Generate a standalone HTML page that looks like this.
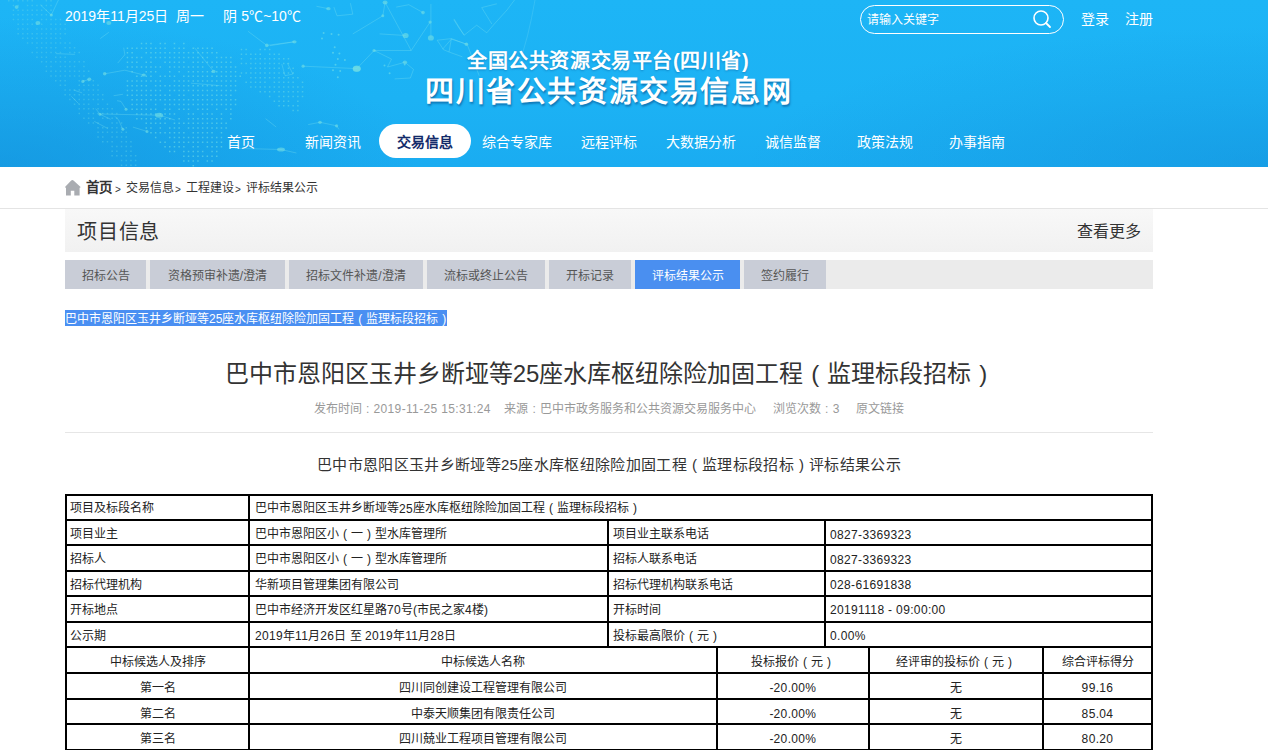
<!DOCTYPE html>
<html lang="zh-CN">
<head>
<meta charset="utf-8">
<style>
*{margin:0;padding:0;box-sizing:border-box}
html,body{width:1268px;height:750px;overflow:hidden;background:#fff}
body{font-family:"Liberation Sans",sans-serif;color:#333;position:relative}
.a{position:absolute;white-space:nowrap}
#hdr{position:absolute;left:0;top:0;width:1268px;height:167px;background:radial-gradient(ellipse 420px 150px at 0% 100%,rgba(18,140,215,.55),rgba(18,140,215,0)),radial-gradient(ellipse 520px 140px at 100% 100%,rgba(18,140,215,.45),rgba(18,140,215,0)),linear-gradient(180deg,#1db5f6 0%,#1cb2f4 60%,#1aacf1 100%);overflow:hidden}
#hdr .t{color:#fff}
.nav{position:absolute;top:124px;height:34px;line-height:36px;width:92px;text-align:center;color:#fff;font-size:14px}
.nav.on{background:#fff;color:#132b6a;font-weight:bold;border-radius:17px}
.tab{position:absolute;top:260px;height:29px;line-height:32px;text-align:center;font-size:12px;color:#555;background:#c9cdd7}
.tab.on{background:#4a8ff0;color:#fff}
.hl{position:absolute;background:#000}
.c{position:absolute;font-size:12px;line-height:16px;color:#222;white-space:nowrap}
.cc{text-align:center}
.n{letter-spacing:.35px;position:relative}
.up .n{top:1px}
.bc{top:180px;font-size:12px;line-height:16px;color:#333}
.gt{top:182px;font-size:10px;line-height:16px;color:#333}
.fp{display:inline-block;width:1em;text-align:center}
</style>
</head>
<body>
<div id="hdr">
<!--bg--><svg class="a" style="left:0;top:0" width="1268" height="167" viewBox="0 0 1268 167">
<path d="M535 0 Q 528 40 519 63" fill="none" stroke="#8fe6f4" stroke-opacity=".3" stroke-width=".7"/>
<path fill="#6ddbe6" fill-opacity=".6" d="M140.8 42.7h1.5v1.5h-1.5zM145.5 42.7h1.5v1.5h-1.5zM150.2 42.7h1.5v1.5h-1.5zM159.6 42.7h1.5v1.5h-1.5zM164.3 42.7h1.5v1.5h-1.5zM173.7 42.7h1.5v1.5h-1.5zM183.1 42.7h1.5v1.5h-1.5zM126.7 47.4h1.5v1.5h-1.5zM131.4 47.4h1.5v1.5h-1.5zM136.1 47.4h1.5v1.5h-1.5zM140.8 47.4h1.5v1.5h-1.5zM145.5 47.4h1.5v1.5h-1.5zM150.2 47.4h1.5v1.5h-1.5zM154.9 47.4h1.5v1.5h-1.5zM159.6 47.4h1.5v1.5h-1.5zM164.3 47.4h1.5v1.5h-1.5zM173.7 47.4h1.5v1.5h-1.5zM178.4 47.4h1.5v1.5h-1.5zM183.1 47.4h1.5v1.5h-1.5zM192.5 47.4h1.5v1.5h-1.5zM197.2 47.4h1.5v1.5h-1.5zM201.9 47.4h1.5v1.5h-1.5zM206.6 47.4h1.5v1.5h-1.5zM211.3 47.4h1.5v1.5h-1.5zM126.7 52.1h1.5v1.5h-1.5zM131.4 52.1h1.5v1.5h-1.5zM145.5 52.1h1.5v1.5h-1.5zM150.2 52.1h1.5v1.5h-1.5zM154.9 52.1h1.5v1.5h-1.5zM159.6 52.1h1.5v1.5h-1.5zM164.3 52.1h1.5v1.5h-1.5zM169.0 52.1h1.5v1.5h-1.5zM173.7 52.1h1.5v1.5h-1.5zM178.4 52.1h1.5v1.5h-1.5zM183.1 52.1h1.5v1.5h-1.5zM187.8 52.1h1.5v1.5h-1.5zM192.5 52.1h1.5v1.5h-1.5zM197.2 52.1h1.5v1.5h-1.5zM201.9 52.1h1.5v1.5h-1.5zM206.6 52.1h1.5v1.5h-1.5zM211.3 52.1h1.5v1.5h-1.5zM216.0 52.1h1.5v1.5h-1.5zM126.7 56.8h1.5v1.5h-1.5zM131.4 56.8h1.5v1.5h-1.5zM136.1 56.8h1.5v1.5h-1.5zM140.8 56.8h1.5v1.5h-1.5zM150.2 56.8h1.5v1.5h-1.5zM154.9 56.8h1.5v1.5h-1.5zM159.6 56.8h1.5v1.5h-1.5zM164.3 56.8h1.5v1.5h-1.5zM169.0 56.8h1.5v1.5h-1.5zM173.7 56.8h1.5v1.5h-1.5zM178.4 56.8h1.5v1.5h-1.5zM183.1 56.8h1.5v1.5h-1.5zM187.8 56.8h1.5v1.5h-1.5zM192.5 56.8h1.5v1.5h-1.5zM197.2 56.8h1.5v1.5h-1.5zM201.9 56.8h1.5v1.5h-1.5zM206.6 56.8h1.5v1.5h-1.5zM216.0 56.8h1.5v1.5h-1.5zM220.7 56.8h1.5v1.5h-1.5zM225.4 56.8h1.5v1.5h-1.5zM230.1 56.8h1.5v1.5h-1.5zM126.7 61.5h1.5v1.5h-1.5zM131.4 61.5h1.5v1.5h-1.5zM136.1 61.5h1.5v1.5h-1.5zM145.5 61.5h1.5v1.5h-1.5zM150.2 61.5h1.5v1.5h-1.5zM164.3 61.5h1.5v1.5h-1.5zM169.0 61.5h1.5v1.5h-1.5zM173.7 61.5h1.5v1.5h-1.5zM178.4 61.5h1.5v1.5h-1.5zM183.1 61.5h1.5v1.5h-1.5zM192.5 61.5h1.5v1.5h-1.5zM197.2 61.5h1.5v1.5h-1.5zM201.9 61.5h1.5v1.5h-1.5zM206.6 61.5h1.5v1.5h-1.5zM211.3 61.5h1.5v1.5h-1.5zM216.0 61.5h1.5v1.5h-1.5zM220.7 61.5h1.5v1.5h-1.5zM225.4 61.5h1.5v1.5h-1.5zM230.1 61.5h1.5v1.5h-1.5zM126.7 66.2h1.5v1.5h-1.5zM131.4 66.2h1.5v1.5h-1.5zM136.1 66.2h1.5v1.5h-1.5zM140.8 66.2h1.5v1.5h-1.5zM145.5 66.2h1.5v1.5h-1.5zM150.2 66.2h1.5v1.5h-1.5zM154.9 66.2h1.5v1.5h-1.5zM159.6 66.2h1.5v1.5h-1.5zM169.0 66.2h1.5v1.5h-1.5zM173.7 66.2h1.5v1.5h-1.5zM178.4 66.2h1.5v1.5h-1.5zM183.1 66.2h1.5v1.5h-1.5zM187.8 66.2h1.5v1.5h-1.5zM192.5 66.2h1.5v1.5h-1.5zM197.2 66.2h1.5v1.5h-1.5zM201.9 66.2h1.5v1.5h-1.5zM211.3 66.2h1.5v1.5h-1.5zM216.0 66.2h1.5v1.5h-1.5zM220.7 66.2h1.5v1.5h-1.5zM225.4 66.2h1.5v1.5h-1.5zM230.1 66.2h1.5v1.5h-1.5zM234.8 66.2h1.5v1.5h-1.5zM131.4 70.9h1.5v1.5h-1.5zM145.5 70.9h1.5v1.5h-1.5zM150.2 70.9h1.5v1.5h-1.5zM154.9 70.9h1.5v1.5h-1.5zM169.0 70.9h1.5v1.5h-1.5zM178.4 70.9h1.5v1.5h-1.5zM187.8 70.9h1.5v1.5h-1.5zM192.5 70.9h1.5v1.5h-1.5zM197.2 70.9h1.5v1.5h-1.5zM201.9 70.9h1.5v1.5h-1.5zM206.6 70.9h1.5v1.5h-1.5zM211.3 70.9h1.5v1.5h-1.5zM216.0 70.9h1.5v1.5h-1.5zM220.7 70.9h1.5v1.5h-1.5zM225.4 70.9h1.5v1.5h-1.5zM230.1 70.9h1.5v1.5h-1.5zM234.8 70.9h1.5v1.5h-1.5zM136.1 75.6h1.5v1.5h-1.5zM140.8 75.6h1.5v1.5h-1.5zM145.5 75.6h1.5v1.5h-1.5zM150.2 75.6h1.5v1.5h-1.5zM159.6 75.6h1.5v1.5h-1.5zM164.3 75.6h1.5v1.5h-1.5zM169.0 75.6h1.5v1.5h-1.5zM173.7 75.6h1.5v1.5h-1.5zM183.1 75.6h1.5v1.5h-1.5zM187.8 75.6h1.5v1.5h-1.5zM192.5 75.6h1.5v1.5h-1.5zM197.2 75.6h1.5v1.5h-1.5zM201.9 75.6h1.5v1.5h-1.5zM206.6 75.6h1.5v1.5h-1.5zM211.3 75.6h1.5v1.5h-1.5zM216.0 75.6h1.5v1.5h-1.5zM220.7 75.6h1.5v1.5h-1.5zM225.4 75.6h1.5v1.5h-1.5zM230.1 75.6h1.5v1.5h-1.5zM234.8 75.6h1.5v1.5h-1.5zM239.5 75.6h1.5v1.5h-1.5zM126.7 80.3h1.5v1.5h-1.5zM131.4 80.3h1.5v1.5h-1.5zM136.1 80.3h1.5v1.5h-1.5zM140.8 80.3h1.5v1.5h-1.5zM145.5 80.3h1.5v1.5h-1.5zM150.2 80.3h1.5v1.5h-1.5zM154.9 80.3h1.5v1.5h-1.5zM159.6 80.3h1.5v1.5h-1.5zM173.7 80.3h1.5v1.5h-1.5zM178.4 80.3h1.5v1.5h-1.5zM183.1 80.3h1.5v1.5h-1.5zM187.8 80.3h1.5v1.5h-1.5zM192.5 80.3h1.5v1.5h-1.5zM197.2 80.3h1.5v1.5h-1.5zM201.9 80.3h1.5v1.5h-1.5zM206.6 80.3h1.5v1.5h-1.5zM211.3 80.3h1.5v1.5h-1.5zM216.0 80.3h1.5v1.5h-1.5zM220.7 80.3h1.5v1.5h-1.5zM225.4 80.3h1.5v1.5h-1.5zM230.1 80.3h1.5v1.5h-1.5zM234.8 80.3h1.5v1.5h-1.5zM126.7 85.0h1.5v1.5h-1.5zM131.4 85.0h1.5v1.5h-1.5zM136.1 85.0h1.5v1.5h-1.5zM140.8 85.0h1.5v1.5h-1.5zM145.5 85.0h1.5v1.5h-1.5zM154.9 85.0h1.5v1.5h-1.5zM159.6 85.0h1.5v1.5h-1.5zM164.3 85.0h1.5v1.5h-1.5zM169.0 85.0h1.5v1.5h-1.5zM173.7 85.0h1.5v1.5h-1.5zM178.4 85.0h1.5v1.5h-1.5zM183.1 85.0h1.5v1.5h-1.5zM187.8 85.0h1.5v1.5h-1.5zM192.5 85.0h1.5v1.5h-1.5zM197.2 85.0h1.5v1.5h-1.5zM201.9 85.0h1.5v1.5h-1.5zM206.6 85.0h1.5v1.5h-1.5zM211.3 85.0h1.5v1.5h-1.5zM216.0 85.0h1.5v1.5h-1.5zM220.7 85.0h1.5v1.5h-1.5zM225.4 85.0h1.5v1.5h-1.5zM230.1 85.0h1.5v1.5h-1.5zM234.8 85.0h1.5v1.5h-1.5zM126.7 89.7h1.5v1.5h-1.5zM131.4 89.7h1.5v1.5h-1.5zM136.1 89.7h1.5v1.5h-1.5zM140.8 89.7h1.5v1.5h-1.5zM145.5 89.7h1.5v1.5h-1.5zM150.2 89.7h1.5v1.5h-1.5zM154.9 89.7h1.5v1.5h-1.5zM159.6 89.7h1.5v1.5h-1.5zM169.0 89.7h1.5v1.5h-1.5zM173.7 89.7h1.5v1.5h-1.5zM178.4 89.7h1.5v1.5h-1.5zM183.1 89.7h1.5v1.5h-1.5zM187.8 89.7h1.5v1.5h-1.5zM192.5 89.7h1.5v1.5h-1.5zM197.2 89.7h1.5v1.5h-1.5zM201.9 89.7h1.5v1.5h-1.5zM206.6 89.7h1.5v1.5h-1.5zM211.3 89.7h1.5v1.5h-1.5zM216.0 89.7h1.5v1.5h-1.5zM220.7 89.7h1.5v1.5h-1.5zM225.4 89.7h1.5v1.5h-1.5zM230.1 89.7h1.5v1.5h-1.5zM234.8 89.7h1.5v1.5h-1.5zM126.7 94.4h1.5v1.5h-1.5zM131.4 94.4h1.5v1.5h-1.5zM136.1 94.4h1.5v1.5h-1.5zM140.8 94.4h1.5v1.5h-1.5zM145.5 94.4h1.5v1.5h-1.5zM150.2 94.4h1.5v1.5h-1.5zM154.9 94.4h1.5v1.5h-1.5zM159.6 94.4h1.5v1.5h-1.5zM164.3 94.4h1.5v1.5h-1.5zM169.0 94.4h1.5v1.5h-1.5zM178.4 94.4h1.5v1.5h-1.5zM183.1 94.4h1.5v1.5h-1.5zM192.5 94.4h1.5v1.5h-1.5zM197.2 94.4h1.5v1.5h-1.5zM201.9 94.4h1.5v1.5h-1.5zM206.6 94.4h1.5v1.5h-1.5zM211.3 94.4h1.5v1.5h-1.5zM216.0 94.4h1.5v1.5h-1.5zM220.7 94.4h1.5v1.5h-1.5zM225.4 94.4h1.5v1.5h-1.5zM230.1 94.4h1.5v1.5h-1.5zM131.4 99.1h1.5v1.5h-1.5zM136.1 99.1h1.5v1.5h-1.5zM140.8 99.1h1.5v1.5h-1.5zM145.5 99.1h1.5v1.5h-1.5zM150.2 99.1h1.5v1.5h-1.5zM154.9 99.1h1.5v1.5h-1.5zM159.6 99.1h1.5v1.5h-1.5zM164.3 99.1h1.5v1.5h-1.5zM169.0 99.1h1.5v1.5h-1.5zM173.7 99.1h1.5v1.5h-1.5zM178.4 99.1h1.5v1.5h-1.5zM183.1 99.1h1.5v1.5h-1.5zM187.8 99.1h1.5v1.5h-1.5zM192.5 99.1h1.5v1.5h-1.5zM197.2 99.1h1.5v1.5h-1.5zM201.9 99.1h1.5v1.5h-1.5zM206.6 99.1h1.5v1.5h-1.5zM211.3 99.1h1.5v1.5h-1.5zM216.0 99.1h1.5v1.5h-1.5zM220.7 99.1h1.5v1.5h-1.5zM225.4 99.1h1.5v1.5h-1.5zM230.1 99.1h1.5v1.5h-1.5zM234.8 99.1h1.5v1.5h-1.5zM131.4 103.8h1.5v1.5h-1.5zM136.1 103.8h1.5v1.5h-1.5zM140.8 103.8h1.5v1.5h-1.5zM145.5 103.8h1.5v1.5h-1.5zM154.9 103.8h1.5v1.5h-1.5zM164.3 103.8h1.5v1.5h-1.5zM169.0 103.8h1.5v1.5h-1.5zM173.7 103.8h1.5v1.5h-1.5zM178.4 103.8h1.5v1.5h-1.5zM183.1 103.8h1.5v1.5h-1.5zM187.8 103.8h1.5v1.5h-1.5zM192.5 103.8h1.5v1.5h-1.5zM197.2 103.8h1.5v1.5h-1.5zM201.9 103.8h1.5v1.5h-1.5zM206.6 103.8h1.5v1.5h-1.5zM211.3 103.8h1.5v1.5h-1.5zM216.0 103.8h1.5v1.5h-1.5zM220.7 103.8h1.5v1.5h-1.5zM225.4 103.8h1.5v1.5h-1.5zM230.1 103.8h1.5v1.5h-1.5zM234.8 103.8h1.5v1.5h-1.5zM131.4 108.5h1.5v1.5h-1.5zM136.1 108.5h1.5v1.5h-1.5zM140.8 108.5h1.5v1.5h-1.5zM145.5 108.5h1.5v1.5h-1.5zM150.2 108.5h1.5v1.5h-1.5zM154.9 108.5h1.5v1.5h-1.5zM164.3 108.5h1.5v1.5h-1.5zM169.0 108.5h1.5v1.5h-1.5zM178.4 108.5h1.5v1.5h-1.5zM183.1 108.5h1.5v1.5h-1.5zM187.8 108.5h1.5v1.5h-1.5zM197.2 108.5h1.5v1.5h-1.5zM201.9 108.5h1.5v1.5h-1.5zM206.6 108.5h1.5v1.5h-1.5zM216.0 108.5h1.5v1.5h-1.5zM225.4 108.5h1.5v1.5h-1.5zM230.1 108.5h1.5v1.5h-1.5zM136.1 113.2h1.5v1.5h-1.5zM140.8 113.2h1.5v1.5h-1.5zM145.5 113.2h1.5v1.5h-1.5zM150.2 113.2h1.5v1.5h-1.5zM154.9 113.2h1.5v1.5h-1.5zM159.6 113.2h1.5v1.5h-1.5zM164.3 113.2h1.5v1.5h-1.5zM169.0 113.2h1.5v1.5h-1.5zM173.7 113.2h1.5v1.5h-1.5zM187.8 113.2h1.5v1.5h-1.5zM192.5 113.2h1.5v1.5h-1.5zM201.9 113.2h1.5v1.5h-1.5zM206.6 113.2h1.5v1.5h-1.5zM211.3 113.2h1.5v1.5h-1.5zM220.7 113.2h1.5v1.5h-1.5zM230.1 113.2h1.5v1.5h-1.5zM136.1 117.9h1.5v1.5h-1.5zM140.8 117.9h1.5v1.5h-1.5zM145.5 117.9h1.5v1.5h-1.5zM150.2 117.9h1.5v1.5h-1.5zM154.9 117.9h1.5v1.5h-1.5zM159.6 117.9h1.5v1.5h-1.5zM164.3 117.9h1.5v1.5h-1.5zM169.0 117.9h1.5v1.5h-1.5zM178.4 117.9h1.5v1.5h-1.5zM187.8 117.9h1.5v1.5h-1.5zM192.5 117.9h1.5v1.5h-1.5zM197.2 117.9h1.5v1.5h-1.5zM201.9 117.9h1.5v1.5h-1.5zM206.6 117.9h1.5v1.5h-1.5zM211.3 117.9h1.5v1.5h-1.5zM216.0 117.9h1.5v1.5h-1.5zM220.7 117.9h1.5v1.5h-1.5zM230.1 117.9h1.5v1.5h-1.5zM145.5 122.6h1.5v1.5h-1.5zM150.2 122.6h1.5v1.5h-1.5zM154.9 122.6h1.5v1.5h-1.5zM159.6 122.6h1.5v1.5h-1.5zM164.3 122.6h1.5v1.5h-1.5zM173.7 122.6h1.5v1.5h-1.5zM178.4 122.6h1.5v1.5h-1.5zM183.1 122.6h1.5v1.5h-1.5zM187.8 122.6h1.5v1.5h-1.5zM192.5 122.6h1.5v1.5h-1.5zM197.2 122.6h1.5v1.5h-1.5zM201.9 122.6h1.5v1.5h-1.5zM206.6 122.6h1.5v1.5h-1.5zM211.3 122.6h1.5v1.5h-1.5zM216.0 122.6h1.5v1.5h-1.5zM220.7 122.6h1.5v1.5h-1.5zM225.4 122.6h1.5v1.5h-1.5zM145.5 127.3h1.5v1.5h-1.5zM150.2 127.3h1.5v1.5h-1.5zM159.6 127.3h1.5v1.5h-1.5zM169.0 127.3h1.5v1.5h-1.5zM173.7 127.3h1.5v1.5h-1.5zM178.4 127.3h1.5v1.5h-1.5zM187.8 127.3h1.5v1.5h-1.5zM192.5 127.3h1.5v1.5h-1.5zM197.2 127.3h1.5v1.5h-1.5zM201.9 127.3h1.5v1.5h-1.5zM206.6 127.3h1.5v1.5h-1.5zM211.3 127.3h1.5v1.5h-1.5zM216.0 127.3h1.5v1.5h-1.5zM220.7 127.3h1.5v1.5h-1.5zM225.4 127.3h1.5v1.5h-1.5zM150.2 132.0h1.5v1.5h-1.5zM154.9 132.0h1.5v1.5h-1.5zM159.6 132.0h1.5v1.5h-1.5zM164.3 132.0h1.5v1.5h-1.5zM169.0 132.0h1.5v1.5h-1.5zM173.7 132.0h1.5v1.5h-1.5zM178.4 132.0h1.5v1.5h-1.5zM183.1 132.0h1.5v1.5h-1.5zM192.5 132.0h1.5v1.5h-1.5zM197.2 132.0h1.5v1.5h-1.5zM201.9 132.0h1.5v1.5h-1.5zM206.6 132.0h1.5v1.5h-1.5zM211.3 132.0h1.5v1.5h-1.5zM220.7 132.0h1.5v1.5h-1.5zM154.9 136.7h1.5v1.5h-1.5zM169.0 136.7h1.5v1.5h-1.5zM173.7 136.7h1.5v1.5h-1.5zM178.4 136.7h1.5v1.5h-1.5zM183.1 136.7h1.5v1.5h-1.5zM187.8 136.7h1.5v1.5h-1.5zM192.5 136.7h1.5v1.5h-1.5zM197.2 136.7h1.5v1.5h-1.5zM201.9 136.7h1.5v1.5h-1.5zM206.6 136.7h1.5v1.5h-1.5zM211.3 136.7h1.5v1.5h-1.5zM216.0 136.7h1.5v1.5h-1.5zM220.7 136.7h1.5v1.5h-1.5zM159.6 141.4h1.5v1.5h-1.5zM164.3 141.4h1.5v1.5h-1.5zM173.7 141.4h1.5v1.5h-1.5zM178.4 141.4h1.5v1.5h-1.5zM183.1 141.4h1.5v1.5h-1.5zM187.8 141.4h1.5v1.5h-1.5zM192.5 141.4h1.5v1.5h-1.5zM197.2 141.4h1.5v1.5h-1.5zM201.9 141.4h1.5v1.5h-1.5zM206.6 141.4h1.5v1.5h-1.5zM211.3 141.4h1.5v1.5h-1.5zM216.0 141.4h1.5v1.5h-1.5zM220.7 141.4h1.5v1.5h-1.5zM164.3 146.1h1.5v1.5h-1.5zM169.0 146.1h1.5v1.5h-1.5zM173.7 146.1h1.5v1.5h-1.5zM178.4 146.1h1.5v1.5h-1.5zM183.1 146.1h1.5v1.5h-1.5zM192.5 146.1h1.5v1.5h-1.5zM197.2 146.1h1.5v1.5h-1.5zM206.6 146.1h1.5v1.5h-1.5zM211.3 146.1h1.5v1.5h-1.5zM216.0 146.1h1.5v1.5h-1.5zM220.7 146.1h1.5v1.5h-1.5zM169.0 150.8h1.5v1.5h-1.5zM173.7 150.8h1.5v1.5h-1.5zM183.1 150.8h1.5v1.5h-1.5zM187.8 150.8h1.5v1.5h-1.5zM192.5 150.8h1.5v1.5h-1.5zM197.2 150.8h1.5v1.5h-1.5zM201.9 150.8h1.5v1.5h-1.5zM211.3 150.8h1.5v1.5h-1.5zM216.0 150.8h1.5v1.5h-1.5zM183.1 155.5h1.5v1.5h-1.5zM187.8 155.5h1.5v1.5h-1.5zM192.5 155.5h1.5v1.5h-1.5zM197.2 155.5h1.5v1.5h-1.5zM201.9 155.5h1.5v1.5h-1.5zM206.6 155.5h1.5v1.5h-1.5zM211.3 155.5h1.5v1.5h-1.5zM216.0 155.5h1.5v1.5h-1.5zM183.1 160.2h1.5v1.5h-1.5zM187.8 160.2h1.5v1.5h-1.5zM192.5 160.2h1.5v1.5h-1.5zM197.2 160.2h1.5v1.5h-1.5zM206.6 160.2h1.5v1.5h-1.5zM211.3 160.2h1.5v1.5h-1.5zM192.5 164.9h1.5v1.5h-1.5z"/>
<path fill="#6ddbe6" fill-opacity=".5" d="M240.7 48.7h1.5v1.5h-1.5zM245.4 48.7h1.5v1.5h-1.5zM259.5 48.7h1.5v1.5h-1.5zM264.2 48.7h1.5v1.5h-1.5zM268.9 48.7h1.5v1.5h-1.5zM240.7 53.4h1.5v1.5h-1.5zM245.4 53.4h1.5v1.5h-1.5zM250.1 53.4h1.5v1.5h-1.5zM254.8 53.4h1.5v1.5h-1.5zM259.5 53.4h1.5v1.5h-1.5zM268.9 53.4h1.5v1.5h-1.5zM273.6 53.4h1.5v1.5h-1.5zM278.3 53.4h1.5v1.5h-1.5zM240.7 58.1h1.5v1.5h-1.5zM250.1 58.1h1.5v1.5h-1.5zM254.8 58.1h1.5v1.5h-1.5zM259.5 58.1h1.5v1.5h-1.5zM264.2 58.1h1.5v1.5h-1.5zM268.9 58.1h1.5v1.5h-1.5zM273.6 58.1h1.5v1.5h-1.5zM278.3 58.1h1.5v1.5h-1.5zM283.0 58.1h1.5v1.5h-1.5zM287.7 58.1h1.5v1.5h-1.5zM240.7 62.8h1.5v1.5h-1.5zM245.4 62.8h1.5v1.5h-1.5zM250.1 62.8h1.5v1.5h-1.5zM254.8 62.8h1.5v1.5h-1.5zM259.5 62.8h1.5v1.5h-1.5zM264.2 62.8h1.5v1.5h-1.5zM268.9 62.8h1.5v1.5h-1.5zM273.6 62.8h1.5v1.5h-1.5zM278.3 62.8h1.5v1.5h-1.5zM283.0 62.8h1.5v1.5h-1.5zM287.7 62.8h1.5v1.5h-1.5zM250.1 67.5h1.5v1.5h-1.5zM254.8 67.5h1.5v1.5h-1.5zM259.5 67.5h1.5v1.5h-1.5zM264.2 67.5h1.5v1.5h-1.5zM268.9 67.5h1.5v1.5h-1.5zM273.6 67.5h1.5v1.5h-1.5zM278.3 67.5h1.5v1.5h-1.5zM287.7 67.5h1.5v1.5h-1.5zM292.4 67.5h1.5v1.5h-1.5zM240.7 72.2h1.5v1.5h-1.5zM245.4 72.2h1.5v1.5h-1.5zM250.1 72.2h1.5v1.5h-1.5zM254.8 72.2h1.5v1.5h-1.5zM259.5 72.2h1.5v1.5h-1.5zM264.2 72.2h1.5v1.5h-1.5zM268.9 72.2h1.5v1.5h-1.5zM273.6 72.2h1.5v1.5h-1.5zM278.3 72.2h1.5v1.5h-1.5zM283.0 72.2h1.5v1.5h-1.5zM287.7 72.2h1.5v1.5h-1.5zM292.4 72.2h1.5v1.5h-1.5zM250.1 76.9h1.5v1.5h-1.5zM254.8 76.9h1.5v1.5h-1.5zM259.5 76.9h1.5v1.5h-1.5zM264.2 76.9h1.5v1.5h-1.5zM268.9 76.9h1.5v1.5h-1.5zM273.6 76.9h1.5v1.5h-1.5zM278.3 76.9h1.5v1.5h-1.5zM283.0 76.9h1.5v1.5h-1.5zM287.7 76.9h1.5v1.5h-1.5zM292.4 76.9h1.5v1.5h-1.5zM297.1 76.9h1.5v1.5h-1.5zM245.4 81.6h1.5v1.5h-1.5zM250.1 81.6h1.5v1.5h-1.5zM254.8 81.6h1.5v1.5h-1.5zM259.5 81.6h1.5v1.5h-1.5zM264.2 81.6h1.5v1.5h-1.5zM273.6 81.6h1.5v1.5h-1.5zM278.3 81.6h1.5v1.5h-1.5zM283.0 81.6h1.5v1.5h-1.5zM287.7 81.6h1.5v1.5h-1.5zM292.4 81.6h1.5v1.5h-1.5zM301.8 81.6h1.5v1.5h-1.5zM250.1 86.3h1.5v1.5h-1.5zM254.8 86.3h1.5v1.5h-1.5zM259.5 86.3h1.5v1.5h-1.5zM264.2 86.3h1.5v1.5h-1.5zM268.9 86.3h1.5v1.5h-1.5zM273.6 86.3h1.5v1.5h-1.5zM278.3 86.3h1.5v1.5h-1.5zM283.0 86.3h1.5v1.5h-1.5zM287.7 86.3h1.5v1.5h-1.5zM292.4 86.3h1.5v1.5h-1.5zM297.1 86.3h1.5v1.5h-1.5zM301.8 86.3h1.5v1.5h-1.5zM259.5 91.0h1.5v1.5h-1.5zM264.2 91.0h1.5v1.5h-1.5zM268.9 91.0h1.5v1.5h-1.5zM273.6 91.0h1.5v1.5h-1.5zM278.3 91.0h1.5v1.5h-1.5zM283.0 91.0h1.5v1.5h-1.5zM287.7 91.0h1.5v1.5h-1.5zM292.4 91.0h1.5v1.5h-1.5zM297.1 91.0h1.5v1.5h-1.5zM301.8 91.0h1.5v1.5h-1.5zM268.9 95.7h1.5v1.5h-1.5zM278.3 95.7h1.5v1.5h-1.5zM283.0 95.7h1.5v1.5h-1.5zM287.7 95.7h1.5v1.5h-1.5zM292.4 95.7h1.5v1.5h-1.5zM297.1 95.7h1.5v1.5h-1.5zM301.8 95.7h1.5v1.5h-1.5zM273.6 100.4h1.5v1.5h-1.5zM278.3 100.4h1.5v1.5h-1.5zM283.0 100.4h1.5v1.5h-1.5zM287.7 100.4h1.5v1.5h-1.5zM297.1 100.4h1.5v1.5h-1.5zM278.3 105.1h1.5v1.5h-1.5zM283.0 105.1h1.5v1.5h-1.5zM287.7 105.1h1.5v1.5h-1.5zM292.4 105.1h1.5v1.5h-1.5zM297.1 105.1h1.5v1.5h-1.5zM292.4 109.8h1.5v1.5h-1.5zM297.1 109.8h1.5v1.5h-1.5z"/>
<path fill="#6ddbe6" fill-opacity=".35" d="M8.0 0.0h1.5v1.5h-1.5zM12.7 0.0h1.5v1.5h-1.5zM17.4 0.0h1.5v1.5h-1.5zM22.1 0.0h1.5v1.5h-1.5zM26.8 0.0h1.5v1.5h-1.5zM31.5 0.0h1.5v1.5h-1.5zM45.6 0.0h1.5v1.5h-1.5zM50.3 0.0h1.5v1.5h-1.5zM12.7 4.7h1.5v1.5h-1.5zM17.4 4.7h1.5v1.5h-1.5zM26.8 4.7h1.5v1.5h-1.5zM31.5 4.7h1.5v1.5h-1.5zM36.2 4.7h1.5v1.5h-1.5zM40.9 4.7h1.5v1.5h-1.5zM45.6 4.7h1.5v1.5h-1.5zM50.3 4.7h1.5v1.5h-1.5zM12.7 9.4h1.5v1.5h-1.5zM17.4 9.4h1.5v1.5h-1.5zM22.1 9.4h1.5v1.5h-1.5zM26.8 9.4h1.5v1.5h-1.5zM31.5 9.4h1.5v1.5h-1.5zM36.2 9.4h1.5v1.5h-1.5zM40.9 9.4h1.5v1.5h-1.5zM45.6 9.4h1.5v1.5h-1.5zM50.3 9.4h1.5v1.5h-1.5zM12.7 14.1h1.5v1.5h-1.5zM17.4 14.1h1.5v1.5h-1.5zM22.1 14.1h1.5v1.5h-1.5zM26.8 14.1h1.5v1.5h-1.5zM31.5 14.1h1.5v1.5h-1.5zM36.2 14.1h1.5v1.5h-1.5zM40.9 14.1h1.5v1.5h-1.5zM45.6 14.1h1.5v1.5h-1.5zM50.3 14.1h1.5v1.5h-1.5zM12.7 18.8h1.5v1.5h-1.5zM17.4 18.8h1.5v1.5h-1.5zM22.1 18.8h1.5v1.5h-1.5zM26.8 18.8h1.5v1.5h-1.5zM31.5 18.8h1.5v1.5h-1.5zM40.9 18.8h1.5v1.5h-1.5zM45.6 18.8h1.5v1.5h-1.5zM50.3 18.8h1.5v1.5h-1.5zM55.0 18.8h1.5v1.5h-1.5zM59.7 18.8h1.5v1.5h-1.5zM17.4 23.5h1.5v1.5h-1.5zM22.1 23.5h1.5v1.5h-1.5zM26.8 23.5h1.5v1.5h-1.5zM31.5 23.5h1.5v1.5h-1.5zM36.2 23.5h1.5v1.5h-1.5zM40.9 23.5h1.5v1.5h-1.5zM50.3 23.5h1.5v1.5h-1.5zM55.0 23.5h1.5v1.5h-1.5zM59.7 23.5h1.5v1.5h-1.5zM64.4 23.5h1.5v1.5h-1.5zM17.4 28.2h1.5v1.5h-1.5zM22.1 28.2h1.5v1.5h-1.5zM26.8 28.2h1.5v1.5h-1.5zM36.2 28.2h1.5v1.5h-1.5zM40.9 28.2h1.5v1.5h-1.5zM45.6 28.2h1.5v1.5h-1.5zM50.3 28.2h1.5v1.5h-1.5zM55.0 28.2h1.5v1.5h-1.5zM59.7 28.2h1.5v1.5h-1.5zM64.4 28.2h1.5v1.5h-1.5zM17.4 32.9h1.5v1.5h-1.5zM22.1 32.9h1.5v1.5h-1.5zM26.8 32.9h1.5v1.5h-1.5zM31.5 32.9h1.5v1.5h-1.5zM36.2 32.9h1.5v1.5h-1.5zM40.9 32.9h1.5v1.5h-1.5zM45.6 32.9h1.5v1.5h-1.5zM50.3 32.9h1.5v1.5h-1.5zM55.0 32.9h1.5v1.5h-1.5zM59.7 32.9h1.5v1.5h-1.5zM64.4 32.9h1.5v1.5h-1.5zM22.1 37.6h1.5v1.5h-1.5zM26.8 37.6h1.5v1.5h-1.5zM31.5 37.6h1.5v1.5h-1.5zM36.2 37.6h1.5v1.5h-1.5zM40.9 37.6h1.5v1.5h-1.5zM45.6 37.6h1.5v1.5h-1.5zM50.3 37.6h1.5v1.5h-1.5zM55.0 37.6h1.5v1.5h-1.5zM59.7 37.6h1.5v1.5h-1.5zM26.8 42.3h1.5v1.5h-1.5zM31.5 42.3h1.5v1.5h-1.5zM36.2 42.3h1.5v1.5h-1.5zM40.9 42.3h1.5v1.5h-1.5zM45.6 42.3h1.5v1.5h-1.5zM50.3 42.3h1.5v1.5h-1.5zM55.0 42.3h1.5v1.5h-1.5zM59.7 42.3h1.5v1.5h-1.5zM64.4 42.3h1.5v1.5h-1.5zM69.1 42.3h1.5v1.5h-1.5zM36.2 47.0h1.5v1.5h-1.5zM40.9 47.0h1.5v1.5h-1.5zM45.6 47.0h1.5v1.5h-1.5zM50.3 47.0h1.5v1.5h-1.5zM55.0 47.0h1.5v1.5h-1.5zM64.4 47.0h1.5v1.5h-1.5zM69.1 47.0h1.5v1.5h-1.5zM73.8 47.0h1.5v1.5h-1.5zM31.5 51.7h1.5v1.5h-1.5zM36.2 51.7h1.5v1.5h-1.5zM40.9 51.7h1.5v1.5h-1.5zM45.6 51.7h1.5v1.5h-1.5zM50.3 51.7h1.5v1.5h-1.5zM55.0 51.7h1.5v1.5h-1.5zM59.7 51.7h1.5v1.5h-1.5zM69.1 51.7h1.5v1.5h-1.5zM73.8 51.7h1.5v1.5h-1.5zM78.5 51.7h1.5v1.5h-1.5zM36.2 56.4h1.5v1.5h-1.5zM40.9 56.4h1.5v1.5h-1.5zM45.6 56.4h1.5v1.5h-1.5zM55.0 56.4h1.5v1.5h-1.5zM59.7 56.4h1.5v1.5h-1.5zM64.4 56.4h1.5v1.5h-1.5zM40.9 61.1h1.5v1.5h-1.5zM45.6 61.1h1.5v1.5h-1.5zM50.3 61.1h1.5v1.5h-1.5zM55.0 61.1h1.5v1.5h-1.5zM59.7 61.1h1.5v1.5h-1.5zM64.4 61.1h1.5v1.5h-1.5zM69.1 61.1h1.5v1.5h-1.5zM73.8 61.1h1.5v1.5h-1.5zM78.5 61.1h1.5v1.5h-1.5zM83.2 61.1h1.5v1.5h-1.5zM45.6 65.8h1.5v1.5h-1.5zM50.3 65.8h1.5v1.5h-1.5zM59.7 65.8h1.5v1.5h-1.5zM64.4 65.8h1.5v1.5h-1.5zM69.1 65.8h1.5v1.5h-1.5zM73.8 65.8h1.5v1.5h-1.5zM83.2 65.8h1.5v1.5h-1.5zM45.6 70.5h1.5v1.5h-1.5zM50.3 70.5h1.5v1.5h-1.5zM55.0 70.5h1.5v1.5h-1.5zM59.7 70.5h1.5v1.5h-1.5zM64.4 70.5h1.5v1.5h-1.5zM69.1 70.5h1.5v1.5h-1.5zM73.8 70.5h1.5v1.5h-1.5zM78.5 70.5h1.5v1.5h-1.5zM83.2 70.5h1.5v1.5h-1.5zM87.9 70.5h1.5v1.5h-1.5zM50.3 75.2h1.5v1.5h-1.5zM55.0 75.2h1.5v1.5h-1.5zM59.7 75.2h1.5v1.5h-1.5zM64.4 75.2h1.5v1.5h-1.5zM69.1 75.2h1.5v1.5h-1.5zM73.8 75.2h1.5v1.5h-1.5zM78.5 75.2h1.5v1.5h-1.5zM83.2 75.2h1.5v1.5h-1.5zM55.0 79.9h1.5v1.5h-1.5zM59.7 79.9h1.5v1.5h-1.5zM64.4 79.9h1.5v1.5h-1.5zM78.5 79.9h1.5v1.5h-1.5zM83.2 79.9h1.5v1.5h-1.5zM87.9 79.9h1.5v1.5h-1.5zM92.6 79.9h1.5v1.5h-1.5zM59.7 84.6h1.5v1.5h-1.5zM64.4 84.6h1.5v1.5h-1.5zM78.5 84.6h1.5v1.5h-1.5zM83.2 84.6h1.5v1.5h-1.5zM87.9 84.6h1.5v1.5h-1.5zM92.6 84.6h1.5v1.5h-1.5zM97.3 84.6h1.5v1.5h-1.5zM64.4 89.3h1.5v1.5h-1.5zM69.1 89.3h1.5v1.5h-1.5zM73.8 89.3h1.5v1.5h-1.5zM78.5 89.3h1.5v1.5h-1.5zM83.2 89.3h1.5v1.5h-1.5zM87.9 89.3h1.5v1.5h-1.5zM92.6 89.3h1.5v1.5h-1.5zM97.3 89.3h1.5v1.5h-1.5zM64.4 94.0h1.5v1.5h-1.5zM69.1 94.0h1.5v1.5h-1.5zM73.8 94.0h1.5v1.5h-1.5zM78.5 94.0h1.5v1.5h-1.5zM83.2 94.0h1.5v1.5h-1.5zM87.9 94.0h1.5v1.5h-1.5zM92.6 94.0h1.5v1.5h-1.5zM97.3 94.0h1.5v1.5h-1.5zM102.0 94.0h1.5v1.5h-1.5zM69.1 98.7h1.5v1.5h-1.5zM73.8 98.7h1.5v1.5h-1.5zM78.5 98.7h1.5v1.5h-1.5zM83.2 98.7h1.5v1.5h-1.5zM87.9 98.7h1.5v1.5h-1.5zM92.6 98.7h1.5v1.5h-1.5zM97.3 98.7h1.5v1.5h-1.5zM102.0 98.7h1.5v1.5h-1.5zM73.8 103.4h1.5v1.5h-1.5zM78.5 103.4h1.5v1.5h-1.5zM83.2 103.4h1.5v1.5h-1.5zM87.9 103.4h1.5v1.5h-1.5zM97.3 103.4h1.5v1.5h-1.5zM106.7 103.4h1.5v1.5h-1.5zM78.5 108.1h1.5v1.5h-1.5zM83.2 108.1h1.5v1.5h-1.5zM87.9 108.1h1.5v1.5h-1.5zM92.6 108.1h1.5v1.5h-1.5zM97.3 108.1h1.5v1.5h-1.5zM102.0 108.1h1.5v1.5h-1.5zM106.7 108.1h1.5v1.5h-1.5zM111.4 108.1h1.5v1.5h-1.5zM78.5 112.8h1.5v1.5h-1.5zM87.9 112.8h1.5v1.5h-1.5zM92.6 112.8h1.5v1.5h-1.5zM97.3 112.8h1.5v1.5h-1.5zM102.0 112.8h1.5v1.5h-1.5zM106.7 112.8h1.5v1.5h-1.5zM111.4 112.8h1.5v1.5h-1.5zM116.1 112.8h1.5v1.5h-1.5zM83.2 117.5h1.5v1.5h-1.5zM87.9 117.5h1.5v1.5h-1.5zM92.6 117.5h1.5v1.5h-1.5zM102.0 117.5h1.5v1.5h-1.5zM106.7 117.5h1.5v1.5h-1.5zM111.4 117.5h1.5v1.5h-1.5zM116.1 117.5h1.5v1.5h-1.5zM87.9 122.2h1.5v1.5h-1.5zM92.6 122.2h1.5v1.5h-1.5zM97.3 122.2h1.5v1.5h-1.5zM111.4 122.2h1.5v1.5h-1.5zM116.1 122.2h1.5v1.5h-1.5zM120.8 122.2h1.5v1.5h-1.5zM97.3 126.9h1.5v1.5h-1.5zM102.0 126.9h1.5v1.5h-1.5zM106.7 126.9h1.5v1.5h-1.5zM111.4 126.9h1.5v1.5h-1.5zM116.1 126.9h1.5v1.5h-1.5zM120.8 126.9h1.5v1.5h-1.5zM125.5 126.9h1.5v1.5h-1.5zM97.3 131.6h1.5v1.5h-1.5zM102.0 131.6h1.5v1.5h-1.5zM106.7 131.6h1.5v1.5h-1.5zM111.4 131.6h1.5v1.5h-1.5zM116.1 131.6h1.5v1.5h-1.5zM120.8 131.6h1.5v1.5h-1.5zM125.5 131.6h1.5v1.5h-1.5zM97.3 136.3h1.5v1.5h-1.5zM102.0 136.3h1.5v1.5h-1.5zM111.4 136.3h1.5v1.5h-1.5zM116.1 136.3h1.5v1.5h-1.5zM120.8 136.3h1.5v1.5h-1.5zM125.5 136.3h1.5v1.5h-1.5zM102.0 141.0h1.5v1.5h-1.5zM106.7 141.0h1.5v1.5h-1.5zM111.4 141.0h1.5v1.5h-1.5zM120.8 141.0h1.5v1.5h-1.5zM125.5 141.0h1.5v1.5h-1.5zM130.2 141.0h1.5v1.5h-1.5zM111.4 145.7h1.5v1.5h-1.5zM116.1 145.7h1.5v1.5h-1.5zM120.8 145.7h1.5v1.5h-1.5zM125.5 145.7h1.5v1.5h-1.5zM130.2 145.7h1.5v1.5h-1.5zM111.4 150.4h1.5v1.5h-1.5zM116.1 150.4h1.5v1.5h-1.5zM125.5 150.4h1.5v1.5h-1.5zM130.2 150.4h1.5v1.5h-1.5zM111.4 155.1h1.5v1.5h-1.5zM116.1 155.1h1.5v1.5h-1.5zM120.8 155.1h1.5v1.5h-1.5zM125.5 155.1h1.5v1.5h-1.5zM130.2 155.1h1.5v1.5h-1.5zM134.9 155.1h1.5v1.5h-1.5zM120.8 159.8h1.5v1.5h-1.5zM125.5 159.8h1.5v1.5h-1.5zM130.2 159.8h1.5v1.5h-1.5zM134.9 159.8h1.5v1.5h-1.5zM120.8 164.5h1.5v1.5h-1.5zM125.5 164.5h1.5v1.5h-1.5zM130.2 164.5h1.5v1.5h-1.5zM134.9 164.5h1.5v1.5h-1.5z"/>
<polyline points="328.4,8.7 316.5,6.3" fill="none" stroke="#86e6ee" stroke-opacity=".42" stroke-width=".7"/>
<polyline points="333.9,7.1 337,15.8 352.8,14.2 350.4,3.2" fill="none" stroke="#86e6ee" stroke-opacity=".42" stroke-width=".7"/>
<polyline points="385.1,2.4 382.8,15.8 360.7,29.2 352.8,33.9" fill="none" stroke="#86e6ee" stroke-opacity=".42" stroke-width=".7"/>
<polyline points="385.1,2.4 411.2,50.5" fill="none" stroke="#86e6ee" stroke-opacity=".42" stroke-width=".7"/>
<polyline points="379.6,33.9 405.6,35.5" fill="none" stroke="#86e6ee" stroke-opacity=".42" stroke-width=".7"/>
<polyline points="430.1,22.1 411.2,50.5" fill="none" stroke="#86e6ee" stroke-opacity=".42" stroke-width=".7"/>
<polyline points="430.9,4 430.9,37.9" fill="none" stroke="#86e6ee" stroke-opacity=".42" stroke-width=".7"/>
<polyline points="374.1,50.5 411.2,50.5" fill="none" stroke="#86e6ee" stroke-opacity=".42" stroke-width=".7"/>
<polyline points="374.1,50.5 356.8,68.6 303.1,66.2" fill="none" stroke="#86e6ee" stroke-opacity=".42" stroke-width=".7"/>
<polyline points="374.1,50.5 391.5,59.1 387.5,67 404.9,62.3 413.5,69.4 410.4,78 394.6,78.9" fill="none" stroke="#86e6ee" stroke-opacity=".42" stroke-width=".7"/>
<polyline points="294.4,41.8 270,45.7" fill="none" stroke="#86e6ee" stroke-opacity=".42" stroke-width=".7"/>
<polyline points="437.2,40.2 451.4,38.6 466.4,44.2" fill="none" stroke="#86e6ee" stroke-opacity=".42" stroke-width=".7"/>
<polyline points="437.2,40.2 443.5,49.7 449,52 462.4,56.8" fill="none" stroke="#86e6ee" stroke-opacity=".42" stroke-width=".7"/>
<polyline points="451.4,38.6 449,52" fill="none" stroke="#86e6ee" stroke-opacity=".42" stroke-width=".7"/>
<polyline points="453.8,19.7 459.3,28.4 464,34.7" fill="none" stroke="#86e6ee" stroke-opacity=".42" stroke-width=".7"/>
<polyline points="423,12.6 408.8,4.7 396.2,7.1" fill="none" stroke="#86e6ee" stroke-opacity=".42" stroke-width=".7"/>
<polyline points="281.8,63.9 285,75.7 292.9,74.1 287.4,63.1" fill="none" stroke="#86e6ee" stroke-opacity=".42" stroke-width=".7"/>
<polyline points="104.7,73.8 124.8,70.2 143.8,75" fill="none" stroke="#86e6ee" stroke-opacity=".42" stroke-width=".7"/>
<polyline points="117.7,63.1 124.8,54.8 123.7,47.7" fill="none" stroke="#86e6ee" stroke-opacity=".42" stroke-width=".7"/>
<polyline points="194.6,47.7 213.6,71.4" fill="none" stroke="#86e6ee" stroke-opacity=".42" stroke-width=".7"/>
<polyline points="191.1,83.2 219.5,85.6" fill="none" stroke="#86e6ee" stroke-opacity=".42" stroke-width=".7"/>
<polyline points="100,114 159.1,115.2 175,120" fill="none" stroke="#86e6ee" stroke-opacity=".42" stroke-width=".7"/>
<polyline points="247.9,31.2 266.8,45.4 294,41.8" fill="none" stroke="#86e6ee" stroke-opacity=".42" stroke-width=".7"/>
<polyline points="265.6,118.7 276.2,127" fill="none" stroke="#86e6ee" stroke-opacity=".42" stroke-width=".7"/>
<polyline points="308.2,124.6 320,122.3 336.6,125.8 339,129.4" fill="none" stroke="#86e6ee" stroke-opacity=".42" stroke-width=".7"/>
<polyline points="234.8,148.3 281,149.5 296.4,153" fill="none" stroke="#86e6ee" stroke-opacity=".42" stroke-width=".7"/>
<polyline points="82.9,81.4 89.3,79.3" fill="none" stroke="#86e6ee" stroke-opacity=".42" stroke-width=".7"/>
<polyline points="113.6,95.7 122.9,94.3" fill="none" stroke="#86e6ee" stroke-opacity=".42" stroke-width=".7"/>
<polyline points="117,100.7 121,101.4 126,109.3" fill="none" stroke="#86e6ee" stroke-opacity=".42" stroke-width=".7"/>
<polyline points="73.6,90 82.1,92.9" fill="none" stroke="#86e6ee" stroke-opacity=".42" stroke-width=".7"/>
<polyline points="71.4,96.4 78.6,103.6" fill="none" stroke="#86e6ee" stroke-opacity=".42" stroke-width=".7"/>
<polyline points="95.7,108.6 100,114.3 110.7,119.3" fill="none" stroke="#86e6ee" stroke-opacity=".42" stroke-width=".7"/>
<polyline points="94.3,121.4 107.9,128.6" fill="none" stroke="#86e6ee" stroke-opacity=".42" stroke-width=".7"/>
<polyline points="115,116.4 118.6,120 122.9,129.3" fill="none" stroke="#86e6ee" stroke-opacity=".42" stroke-width=".7"/>
<polyline points="132.9,127.1 147,131.4" fill="none" stroke="#86e6ee" stroke-opacity=".42" stroke-width=".7"/>
<polyline points="40.2,4.7 51.3,15 58.4,0" fill="none" stroke="#86e6ee" stroke-opacity=".42" stroke-width=".7"/>
<polyline points="100.2,38.6 108.8,32.3" fill="none" stroke="#86e6ee" stroke-opacity=".42" stroke-width=".7"/>
<polyline points="56,53.6 74.9,54.4" fill="none" stroke="#86e6ee" stroke-opacity=".42" stroke-width=".7"/>
<polyline points="454,18.9 464,35.3 476.7,25.2 486.8,32.8 494.3,24 507,10 514.5,0" fill="none" stroke="#86e6ee" stroke-opacity=".42" stroke-width=".7"/>
<polyline points="442.6,49.2 451.4,39.1 466.6,44.2" fill="none" stroke="#86e6ee" stroke-opacity=".42" stroke-width=".7"/>
<polyline points="479.2,75.7 466.6,42.9" fill="none" stroke="#86e6ee" stroke-opacity=".42" stroke-width=".7"/>
<polyline points="491.8,24 481.7,7.6 496.8,3.8" fill="none" stroke="#86e6ee" stroke-opacity=".42" stroke-width=".7"/>
<circle cx="323.6" cy="33" r="1" fill="#72dde8" fill-opacity=".6"/>
<circle cx="331.5" cy="33.9" r="1" fill="#72dde8" fill-opacity=".6"/>
<circle cx="338.6" cy="34.7" r="1" fill="#72dde8" fill-opacity=".6"/>
<circle cx="322" cy="38.6" r="1" fill="#72dde8" fill-opacity=".6"/>
<circle cx="334.7" cy="47.3" r="1" fill="#72dde8" fill-opacity=".6"/>
<circle cx="333" cy="52.8" r="1" fill="#72dde8" fill-opacity=".6"/>
<circle cx="339.4" cy="53.6" r="1" fill="#72dde8" fill-opacity=".6"/>
<circle cx="337.8" cy="59.1" r="1" fill="#72dde8" fill-opacity=".6"/>
<circle cx="344.9" cy="60" r="1" fill="#72dde8" fill-opacity=".6"/>
<circle cx="335.5" cy="64.7" r="1" fill="#72dde8" fill-opacity=".6"/>
<circle cx="340.2" cy="71" r="1" fill="#72dde8" fill-opacity=".6"/>
<circle cx="337.8" cy="77.3" r="1" fill="#72dde8" fill-opacity=".6"/>
<circle cx="333" cy="70.2" r="1" fill="#72dde8" fill-opacity=".6"/>
<circle cx="384.5" cy="65.6" r="1" fill="#72dde8" fill-opacity=".6"/>
<circle cx="389.6" cy="73.2" r="1" fill="#72dde8" fill-opacity=".6"/>
<circle cx="404.7" cy="64.4" r="1" fill="#72dde8" fill-opacity=".6"/>
<ellipse cx="328.4" cy="8.7" rx="2.2" ry="1.6" fill="#74e0e2" fill-opacity=".6"/>
<ellipse cx="385.1" cy="2.4" rx="2.5" ry="2" fill="#74e0e2" fill-opacity=".6"/>
<ellipse cx="405.6" cy="35.5" rx="3" ry="2.6" fill="#74e0e2" fill-opacity=".6"/>
<ellipse cx="430.9" cy="37.9" rx="3" ry="2.6" fill="#74e0e2" fill-opacity=".6"/>
<ellipse cx="356.8" cy="68.6" rx="4" ry="3" fill="#74e0e2" fill-opacity=".6"/>
<ellipse cx="294.4" cy="41.8" rx="2.2" ry="1.6" fill="#74e0e2" fill-opacity=".6"/>
<ellipse cx="404.9" cy="62.3" rx="2.2" ry="1.8" fill="#74e0e2" fill-opacity=".6"/>
<ellipse cx="159.1" cy="115.2" rx="4" ry="2.5" fill="#74e0e2" fill-opacity=".6"/>
<ellipse cx="356.7" cy="69" rx="4" ry="3" fill="#74e0e2" fill-opacity=".6"/>
<ellipse cx="281" cy="149.5" rx="4" ry="2" fill="#74e0e2" fill-opacity=".6"/>
<ellipse cx="37.9" cy="22.9" rx="2.5" ry="2" fill="#74e0e2" fill-opacity=".6"/>
<ellipse cx="108.8" cy="22.9" rx="2.5" ry="2" fill="#74e0e2" fill-opacity=".6"/>
<ellipse cx="143.8" cy="75" rx="2" ry="1.6" fill="#74e0e2" fill-opacity=".6"/>
<ellipse cx="213.6" cy="71.4" rx="2" ry="1.6" fill="#74e0e2" fill-opacity=".6"/>
<ellipse cx="430.1" cy="22.1" rx="1.6" ry="1.6" fill="#74e0e2" fill-opacity=".6"/>
<ellipse cx="382.8" cy="15.8" rx="1.5" ry="1.5" fill="#74e0e2" fill-opacity=".6"/>
<ellipse cx="374.1" cy="50.5" rx="1.6" ry="1.6" fill="#74e0e2" fill-opacity=".6"/>
<ellipse cx="303.1" cy="66.2" rx="1.6" ry="1.6" fill="#74e0e2" fill-opacity=".6"/>
<ellipse cx="466.4" cy="44.2" rx="1.8" ry="1.8" fill="#74e0e2" fill-opacity=".6"/>
<ellipse cx="423" cy="12.6" rx="1.8" ry="1.8" fill="#74e0e2" fill-opacity=".6"/>
<ellipse cx="104.7" cy="73.8" rx="1.8" ry="1.8" fill="#74e0e2" fill-opacity=".6"/>
<ellipse cx="100" cy="114.3" rx="1.5" ry="1.5" fill="#74e0e2" fill-opacity=".6"/>
<ellipse cx="126" cy="109.3" rx="1.5" ry="1.5" fill="#74e0e2" fill-opacity=".6"/>
<ellipse cx="147" cy="131.4" rx="1.5" ry="1.5" fill="#74e0e2" fill-opacity=".6"/>
<ellipse cx="122.9" cy="129.3" rx="1.5" ry="1.5" fill="#74e0e2" fill-opacity=".6"/>
<ellipse cx="16.6" cy="7.1" rx="2" ry="1.8" fill="#74e0e2" fill-opacity=".6"/>
<ellipse cx="51.3" cy="15" rx="1.6" ry="1.6" fill="#74e0e2" fill-opacity=".6"/>
<ellipse cx="89.3" cy="79.3" rx="2" ry="1.8" fill="#74e0e2" fill-opacity=".6"/>
<ellipse cx="82.9" cy="81.4" rx="1.6" ry="1.6" fill="#74e0e2" fill-opacity=".6"/>
<ellipse cx="336.6" cy="125.8" rx="1.6" ry="1.6" fill="#74e0e2" fill-opacity=".6"/>
<ellipse cx="320" cy="122.3" rx="1.8" ry="1.6" fill="#74e0e2" fill-opacity=".6"/>
<ellipse cx="266.8" cy="45.4" rx="1.8" ry="1.8" fill="#74e0e2" fill-opacity=".6"/>
</svg><!--/bg-->
  <div class="a t" style="left:65px;top:6px;font-size:14px;line-height:20px">2019年11月25日&nbsp;&nbsp;周一&nbsp;&nbsp;&nbsp;&nbsp;&nbsp;阴 5℃~10℃</div>
  <div class="a" style="left:860px;top:5px;width:204px;height:29px;border:1px solid #fff;border-radius:15px"></div>
  <div class="a t" style="left:867px;top:12px;font-size:12px;line-height:16px">请输入关键字</div>
  <svg class="a" style="left:1030px;top:8px" width="24" height="22" viewBox="0 0 24 22"><circle cx="11" cy="10" r="7" fill="none" stroke="#fff" stroke-width="1.6"/><line x1="16" y1="15" x2="20" y2="19" stroke="#fff" stroke-width="1.8" stroke-linecap="round"/></svg>
  <div class="a t" style="left:1081px;top:9px;font-size:14px;line-height:20px">登录</div>
  <div class="a t" style="left:1125px;top:9px;font-size:14px;line-height:20px">注册</div>
  <div class="a t" style="left:467px;top:49px;font-size:20px;line-height:24px;letter-spacing:0.6px;font-weight:bold;text-shadow:0 1px 2px rgba(0,60,120,.35)">全国公共资源交易平台(四川省)</div>
  <div class="a t" style="left:425px;top:73px;font-size:29px;line-height:38px;letter-spacing:1.6px;font-weight:bold;text-shadow:1px 2px 2px rgba(0,50,110,.45)">四川省公共资源交易信息网</div>
  <div class="nav" style="left:195px">首页</div>
  <div class="nav" style="left:287px">新闻资讯</div>
  <div class="nav on" style="left:379px">交易信息</div>
  <div class="nav" style="left:471px">综合专家库</div>
  <div class="nav" style="left:563px">远程评标</div>
  <div class="nav" style="left:655px">大数据分析</div>
  <div class="nav" style="left:747px">诚信监督</div>
  <div class="nav" style="left:839px">政策法规</div>
  <div class="nav" style="left:931px">办事指南</div>
</div>

<!-- breadcrumb -->
<svg class="a" style="left:65px;top:180px" width="16" height="16" viewBox="0 0 16 16"><path d="M0 6.9 L6.2 0.5 Q7.35 -0.3 8.5 0.5 L15.6 6.9 L15.1 7.7 L14.6 7.7 L14.6 15.6 L9.3 15.6 L9.3 10.7 L5.8 10.7 L5.8 15.6 L1 15.6 L1 7.7 L0.5 7.7 Z" fill="#a9acb1"/></svg>
<div class="a" style="left:86px;top:179px;font-size:13.5px;line-height:18px;color:#333;font-weight:bold">首页</div>
<div class="a gt" style="left:115px">&gt;</div><div class="a bc" style="left:126px">交易信息</div>
<div class="a gt" style="left:175px">&gt;</div><div class="a bc" style="left:186px">工程建设</div>
<div class="a gt" style="left:235px">&gt;</div><div class="a bc" style="left:246px">评标结果公示</div>
<div class="a" style="left:0;top:208px;width:1268px;height:1px;background:#e4e4e4"></div>

<!-- project info -->
<div class="a" style="left:65px;top:209px;width:1088px;height:43px;background:linear-gradient(180deg,#f8f8f8,#f1f1f1)"></div>
<div class="a" style="left:77px;top:218px;font-size:20px;line-height:28px;color:#333;letter-spacing:.8px">项目信息</div>
<div class="a" style="left:1077px;top:221px;font-size:16px;line-height:22px;color:#333">查看更多</div>

<div class="a" style="left:65px;top:260px;width:1088px;height:29px;background:#ebebeb"></div>
<div class="tab" style="left:65px;width:81px">招标公告</div>
<div class="tab" style="left:150px;width:135px">资格预审补遗/澄清</div>
<div class="tab" style="left:289px;width:134px">招标文件补遗/澄清</div>
<div class="tab" style="left:427px;width:118px">流标或终止公告</div>
<div class="tab" style="left:549px;width:82px">开标记录</div>
<div class="tab on" style="left:635px;width:105px">评标结果公示</div>
<div class="tab" style="left:744px;width:82px">签约履行</div>

<!-- selected text -->
<div class="a" style="left:65px;top:310px;width:382px;height:16px;background:#4a8ff2"></div>
<div class="a" style="left:65px;top:311px;font-size:12px;line-height:16px;color:#fff">巴中市恩阳区玉井乡断垭等25座水库枢纽除险加固工程<span class="fp">(</span>监理标段招标<span class="fp">)</span></div>

<!-- title -->
<div class="a" style="left:66px;width:1088px;text-align:center;top:358px;font-size:24px;line-height:32px;color:#333">巴中市恩阳区玉井乡断垭等25座水库枢纽除险加固工程<span class="fp">(</span>监理标段招标<span class="fp">)</span></div>
<div class="a" style="left:65px;width:1088px;text-align:center;top:401px;font-size:12px;line-height:16px;color:#999">发布时间<span class="fp">:</span><span class="n" style="top:0">2019-11-25 15:31:24</span>&nbsp;&nbsp;&nbsp;&nbsp;来源<span class="fp">:</span>巴中市政务服务和公共资源交易服务中心&nbsp;&nbsp;&nbsp;&nbsp;&nbsp;浏览次数<span class="fp">:</span><span class="n" style="top:0">3</span>&nbsp;&nbsp;&nbsp;&nbsp;&nbsp;原文链接</div>
<div class="a" style="left:65px;top:432px;width:1088px;height:1px;background:#e6e6e6"></div>
<div class="a" style="left:65px;width:1088px;text-align:center;top:454px;font-size:15px;line-height:22px;letter-spacing:0.34px;color:#333">巴中市恩阳区玉井乡断垭等25座水库枢纽除险加固工程<span class="fp">(</span>监理标段招标<span class="fp">)</span>评标结果公示</div>

<!-- table lines -->
<div id="tbl">
<div class="hl" style="left:65px;top:494px;width:1088px;height:2px"></div>
<div class="hl" style="left:65px;top:519px;width:1088px;height:2px"></div>
<div class="hl" style="left:65px;top:544px;width:1088px;height:2px"></div>
<div class="hl" style="left:65px;top:570px;width:1088px;height:2px"></div>
<div class="hl" style="left:65px;top:595px;width:1088px;height:2px"></div>
<div class="hl" style="left:65px;top:621px;width:1088px;height:2px"></div>
<div class="hl" style="left:65px;top:646px;width:1088px;height:2px"></div>
<div class="hl" style="left:65px;top:672px;width:1088px;height:2px"></div>
<div class="hl" style="left:65px;top:698px;width:1088px;height:2px"></div>
<div class="hl" style="left:65px;top:723px;width:1088px;height:2px"></div>
<div class="hl" style="left:65px;top:749px;width:1088px;height:2px"></div>
<div class="hl" style="left:65px;top:494px;width:2px;height:256px"></div>
<div class="hl" style="left:1151px;top:494px;width:2px;height:256px"></div>
<div class="hl" style="left:248px;top:494px;width:2px;height:256px"></div>
<div class="hl" style="left:607px;top:519px;width:2px;height:127px"></div>
<div class="hl" style="left:824px;top:519px;width:2px;height:127px"></div>
<div class="hl" style="left:716px;top:646px;width:2px;height:104px"></div>
<div class="hl" style="left:868px;top:646px;width:2px;height:104px"></div>
<div class="hl" style="left:1042px;top:646px;width:2px;height:104px"></div>
<div class="c up" style="left:70px;top:499.5px">项目及标段名称</div>
<div class="c up" style="left:255px;top:499.5px">巴中市恩阳区玉井乡断垭等<span class="n">25</span>座水库枢纽除险加固工程<span class="fp">(</span>监理标段招标<span class="fp">)</span></div>
<div class="c up" style="left:70px;top:526.0px">项目业主</div>
<div class="c up" style="left:255px;top:526.0px">巴中市恩阳区小<span class="fp">(</span>一<span class="fp">)</span>型水库管理所</div>
<div class="c up" style="left:613px;top:526.0px">项目业主联系电话</div>
<div class="c up" style="left:830px;top:526.0px"><span class="n">0827-3369323</span></div>
<div class="c up" style="left:70px;top:551.0px">招标人</div>
<div class="c up" style="left:255px;top:551.0px">巴中市恩阳区小<span class="fp">(</span>一<span class="fp">)</span>型水库管理所</div>
<div class="c up" style="left:613px;top:551.0px">招标人联系电话</div>
<div class="c up" style="left:830px;top:551.0px"><span class="n">0827-3369323</span></div>
<div class="c" style="left:70px;top:577.0px">招标代理机构</div>
<div class="c" style="left:255px;top:577.0px">华新项目管理集团有限公司</div>
<div class="c" style="left:613px;top:577.0px">招标代理机构联系电话</div>
<div class="c" style="left:830px;top:577.0px"><span class="n">028-61691838</span></div>
<div class="c" style="left:70px;top:602.0px">开标地点</div>
<div class="c" style="left:255px;top:602.0px">巴中市经济开发区红星路<span class="n">70</span>号(市民之家<span class="n">4</span>楼)</div>
<div class="c" style="left:613px;top:602.0px">开标时间</div>
<div class="c" style="left:830px;top:602.0px"><span class="n">20191118 - 09:00:00</span></div>
<div class="c" style="left:70px;top:628.0px">公示期</div>
<div class="c" style="left:255px;top:628.0px"><span class="n">2019</span>年<span class="n">11</span>月<span class="n">26</span>日 至 <span class="n">2019</span>年<span class="n">11</span>月<span class="n">28</span>日</div>
<div class="c" style="left:613px;top:628.0px">投标最高限价<span class="fp">(</span>元<span class="fp">)</span></div>
<div class="c" style="left:830px;top:628.0px"><span class="n">0.00%</span></div>
<div class="c cc" style="left:67px;width:181px;top:654.0px">中标候选人及排序</div>
<div class="c cc" style="left:250px;width:466px;top:654.0px">中标候选人名称</div>
<div class="c cc" style="left:718px;width:150px;top:654.0px">投标报价<span class="fp">(</span>元<span class="fp">)</span></div>
<div class="c cc" style="left:870px;width:172px;top:654.0px">经评审的投标价<span class="fp">(</span>元<span class="fp">)</span></div>
<div class="c cc" style="left:1044px;width:107px;top:654.0px">综合评标得分</div>
<div class="c cc" style="left:67px;width:181px;top:680.0px">第一名</div>
<div class="c cc" style="left:250px;width:466px;top:680.0px">四川同创建设工程管理有限公司</div>
<div class="c cc" style="left:718px;width:150px;top:680.0px">-<span class="n">20.00%</span></div>
<div class="c cc" style="left:870px;width:172px;top:680.0px">无</div>
<div class="c cc" style="left:1044px;width:107px;top:680.0px"><span class="n">99.16</span></div>
<div class="c cc" style="left:67px;width:181px;top:706.0px">第二名</div>
<div class="c cc" style="left:250px;width:466px;top:706.0px">中泰天顺集团有限责任公司</div>
<div class="c cc" style="left:718px;width:150px;top:706.0px">-<span class="n">20.00%</span></div>
<div class="c cc" style="left:870px;width:172px;top:706.0px">无</div>
<div class="c cc" style="left:1044px;width:107px;top:706.0px"><span class="n">85.04</span></div>
<div class="c cc" style="left:67px;width:181px;top:731.0px">第三名</div>
<div class="c cc" style="left:250px;width:466px;top:731.0px">四川兢业工程项目管理有限公司</div>
<div class="c cc" style="left:718px;width:150px;top:731.0px">-<span class="n">20.00%</span></div>
<div class="c cc" style="left:870px;width:172px;top:731.0px">无</div>
<div class="c cc" style="left:1044px;width:107px;top:731.0px"><span class="n">80.20</span></div>
</div><!--/tbl-->
</body>
</html>
